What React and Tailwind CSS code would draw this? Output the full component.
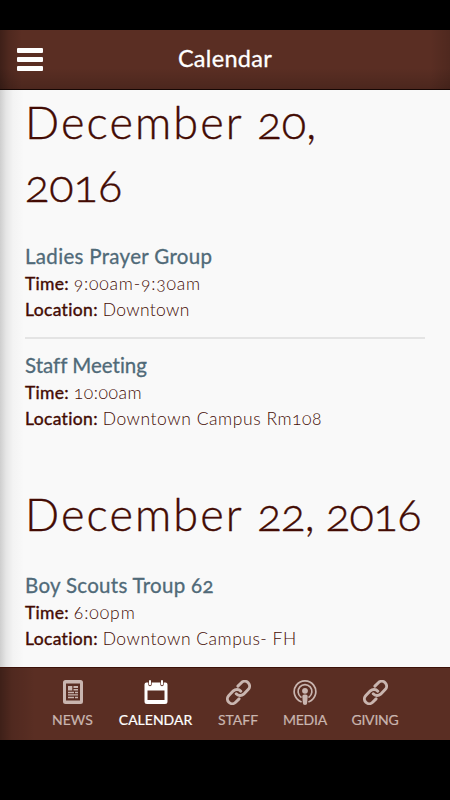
import React from 'react';

function NewsIcon() {
  return (
    <svg width="20" height="24" viewBox="0 0 20 24" fill="currentColor">
      <path fillRule="evenodd" d="M2.500 0h15A2.500 2.500 0 0 1 20 2.500v19a2.500 2.500 0 0 1-2.500 2.500h-15A2.500 2.500 0 0 1 0 21.500v-19A2.500 2.500 0 0 1 2.500 0ZM3 3.500v17h14V3.500Z" />
      <path d="M5 6h4.300v4.500H5zM10.500 6H15v2h-4.500zM10.500 9H15v1.500h-4.500zM5 11.700h6v1.500H5zM12 11.700h3v1.500h-3zM5 14.300h10v1.200H5zM5 16.800h6v1.500H5zM12 16.800h3v1.500h-3z" />
    </svg>
  );
}

function CalendarIcon() {
  return (
    <svg width="24" height="24" viewBox="0 0 24 24" fill="currentColor">
      <path fillRule="evenodd" d="M2.500 2.500H4.300V4.500a1.700 1.700 0 0 0 3.400 0V2.500h8.600V4.500a1.700 1.700 0 0 0 3.400 0V2.500h1.800A2 2 0 0 1 23.500 4.500v17a2.500 2.500 0 0 1-2.500 2.500H3A2.500 2.500 0 0 1 .5 21.500v-17a2 2 0 0 1 2-2ZM3.500 10.500v9.500h17V10.500Z" />
      <rect x="5" y="0" width="2" height="5.200" rx="1" />
      <rect x="17" y="0" width="2" height="5.200" rx="1" />
    </svg>
  );
}

function LinkIcon() {
  return (
    <svg width="25" height="25" viewBox="1 1 22 22" fill="none" stroke="currentColor" strokeWidth="2.600" strokeLinecap="round" strokeLinejoin="round">
      <path d="M10 13.200a4.600 4.600 0 0 0 6.500.3l4-4.100a4.200 4.200 0 0 0-6-6l-3 3" />
      <path d="M14 10.800a4.600 4.600 0 0 0-6.500-.3l-4 4.100a4.200 4.200 0 0 0 6 6l3-3" />
    </svg>
  );
}

function PodcastIcon() {
  return (
    <svg width="24" height="25" viewBox="0 0 24 25" fill="none" stroke="currentColor" strokeWidth="1.700" strokeLinecap="round">
      <path d="M8 21.700a10.800 10.800 0 1 1 8 0" />
      <path d="M8 17.100a6.900 6.900 0 1 1 8 0" />
      <circle cx="12" cy="10.800" r="2.900" fill="currentColor" stroke="none" />
      <path d="M9.300 16.500a2 2 0 0 1 2-2h1.400a2 2 0 0 1 2 2l-.6 6.800a2.100 1.700 0 0 1-4.200 0Z" fill="currentColor" stroke="none" />
    </svg>
  );
}

function Event({ title, titleClass, time, timeClass, location, locationClass }) {
  return (
    <div className="text-[17.5px] leading-[26px]">
      <h2 className={'text-[20.5px] leading-[29px] font-normal text-[#506a78] [-webkit-text-stroke:0.3px_#506a78] ' + titleClass}>{title}</h2>
      <p>
        <b className="font-normal tracking-[0.3px] [-webkit-text-stroke:0.4px_#430b03]">Time:</b> <span className={timeClass}>{time}</span>
      </p>
      <p>
        <b className="font-normal tracking-[0.35px] [-webkit-text-stroke:0.4px_#430b03]">Location:</b> <span className={locationClass}>{location}</span>
      </p>
    </div>
  );
}

const heading = 'text-[45px] leading-[63px] font-light [-webkit-text-stroke:0.4px_#430b03]';

export default function App() {
  return (
    <div className="flex h-[800px] w-[450px] flex-col overflow-hidden bg-black py-[30px] font-['Lato','Open_Sans',sans-serif] [font-variant-numeric:oldstyle-nums]">
      <header className="grid h-[60px] shrink-0 grid-cols-[1fr_auto_1fr] items-center border-b border-[#160704] bg-[#5a2e23] bg-[linear-gradient(90deg,#00000050_0px,#00000020_9px,transparent_22px,transparent_430px,#00000020_450px),linear-gradient(180deg,transparent_38px,#00000028_59px)] px-[17px] text-white">
        <button aria-label="Menu" className="flex w-[26px] flex-col gap-1">
          <span className="h-[5px] rounded-[1px] bg-white" />
          <span className="h-[5px] rounded-[1px] bg-white" />
          <span className="h-[5px] rounded-[1px] bg-white" />
        </button>
        <h1 className="pb-1 text-[23.5px] leading-7 tracking-[0.3px] [-webkit-text-stroke:0.3px_white]">Calendar</h1>
      </header>

      <main className="h-[577px] shrink-0 overflow-hidden bg-[#f9f9f9] bg-[linear-gradient(90deg,#cecece_0px,#e5e5e5_6px,#f3f3f3_13px,#f9f9f9_24px)] pr-[25px] pl-[25px] font-light text-[#430b03]">
        <h2 className={heading + ' pt-px'}><span className="tracking-[2.1px]">December </span><span className="tracking-[0.3px]">20,</span><br /><span>2016</span></h2>
        <div className="mt-[25px]">
          <Event title="Ladies Prayer Group" titleClass="tracking-[0.32px]" time="9:00am-9:30am" timeClass="tracking-[0.8px]" location="Downtown" locationClass="tracking-[0.35px]" />
        </div>
        <hr className="mt-[14px] mb-[12px] border-t-2 border-[#e4e4e4]" />
        <Event title="Staff Meeting" titleClass="[font-variant-ligatures:none]" time="10:00am" timeClass="tracking-[0.55px]" location="Downtown Campus Rm108" locationClass="tracking-[0.55px]" />
        <h2 className={heading + ' mt-[51px] whitespace-nowrap'}><span className="tracking-[2.1px]">December </span><span className="tracking-[-0.5px]">22, 2016</span></h2>
        <div className="mt-[25px]">
          <Event title="Boy Scouts Troup 62" titleClass="tracking-[0.3px]" time="6:00pm" timeClass="tracking-[0.95px]" location="Downtown Campus- FH" locationClass="tracking-[0.5px]" />
        </div>
      </main>

      <nav className="flex h-[73px] shrink-0 justify-center gap-[25px] border-t border-[#3c1209] bg-[#5a2e23] bg-[linear-gradient(90deg,#00000050_0px,#0000001c_12px,transparent_35px)] pt-3 text-[14px] leading-[18px] text-[#c9b5af] [-webkit-text-stroke:0.2px_currentColor]">
        <div className="flex w-[42px] flex-col items-center gap-[6px]"><span className="flex h-[25px]"><NewsIcon /></span><span>NEWS</span></div>
        <div className="flex w-[74px] flex-col items-center gap-[6px] text-white"><span className="flex h-[25px]"><CalendarIcon /></span><span>CALENDAR</span></div>
        <div className="flex w-[41px] flex-col items-center gap-[6px]"><span className="flex h-[25px]"><LinkIcon /></span><span>STAFF</span></div>
        <div className="flex w-[43px] flex-col items-center gap-[6px]"><span className="flex h-[25px]"><PodcastIcon /></span><span className="tracking-[-0.2px]">MEDIA</span></div>
        <div className="flex w-[47px] flex-col items-center gap-[6px]"><span className="flex h-[25px]"><LinkIcon /></span><span className="tracking-[-0.2px]">GIVING</span></div>
      </nav>
    </div>
  );
}
